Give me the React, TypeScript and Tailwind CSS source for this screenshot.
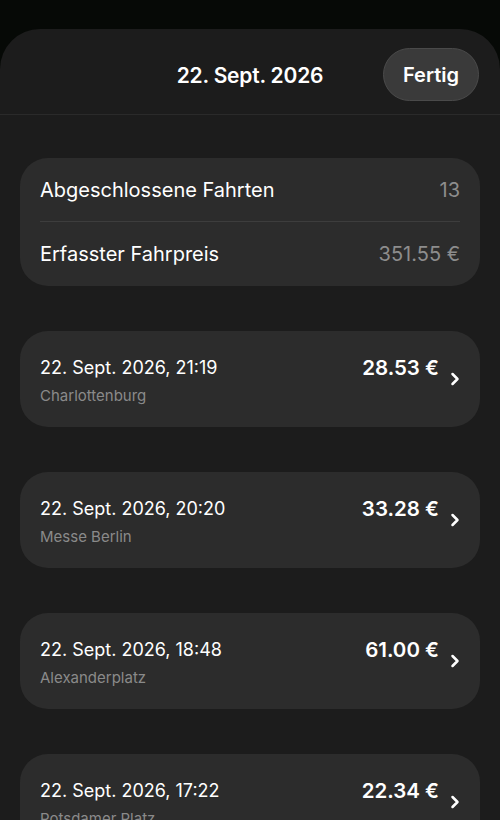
import { ChevronRight } from 'lucide-react';

interface Trip {
  id: string;
  date: string;
  place: string;
  price: string;
}

const trips: Trip[] = [
  { id: '1', date: '22. Sept. 2026, 21:19', place: 'Charlottenburg', price: '28.53 €' },
  { id: '2', date: '22. Sept. 2026, 20:20', place: 'Messe Berlin', price: '33.28 €' },
  { id: '3', date: '22. Sept. 2026, 18:48', place: 'Alexanderplatz', price: '61.00 €' },
  { id: '4', date: '22. Sept. 2026, 17:22', place: 'Potsdamer Platz', price: '22.34 €' },
];

export default function App() {
  return (
    <div
      className="h-[820px] w-[500px] overflow-hidden bg-[#060906] pt-[29px] text-white"
      style={{ fontFamily: 'Inter, "Noto Sans", sans-serif' }}
    >
      <div className="h-full rounded-t-[40px] bg-[#1c1c1c]">
        <div className="relative flex h-[86px] items-center justify-center border-b border-[#2a2a2a]">
          <h1 className="mt-[8px] text-[21px] font-semibold tracking-[-0.2px]">22. Sept. 2026</h1>
          <button className="absolute right-[21px] top-[19px] h-[53px] w-[96px] rounded-full border border-[#4a4a4a] bg-[#3a3a3a] text-[20px] font-semibold">
            Fertig
          </button>
        </div>

        <div className="px-5 pt-[43px]">
          <div className="rounded-[28px] bg-[#2c2c2c] px-5">
            <div className="flex h-[63px] items-center justify-between text-[20px]">
              <span>Abgeschlossene Fahrten</span>
              <span className="text-[#8d8d8d]">13</span>
            </div>
            <div className="h-px bg-[#3d3d3d]" />
            <div className="flex h-[64px] items-center justify-between text-[20px]">
              <span>Erfasster Fahrpreis</span>
              <span className="text-[#8d8d8d]">351.55 €</span>
            </div>
          </div>

          <div className="mt-[45px] flex flex-col gap-[45px]">
            {trips.map((trip) => (
              <div
                key={trip.id}
                className="flex h-[96px] items-start rounded-[28px] bg-[#2c2c2c] pl-5 pr-[15px] pt-[25px]"
              >
                <div className="flex-1">
                  <div className="text-[18px] leading-[24px]">{trip.date}</div>
                  <div className="mt-[6px] text-[15px] leading-[20px] text-[#8a8a8a]">{trip.place}</div>
                </div>
                <div className="text-[20.5px] font-semibold leading-[24px]">{trip.price}</div>
                <ChevronRight className="ml-[6px] mt-[13px] h-[20px] w-[20px]" strokeWidth={3} />
              </div>
            ))}
          </div>
        </div>
      </div>
    </div>
  );
}
